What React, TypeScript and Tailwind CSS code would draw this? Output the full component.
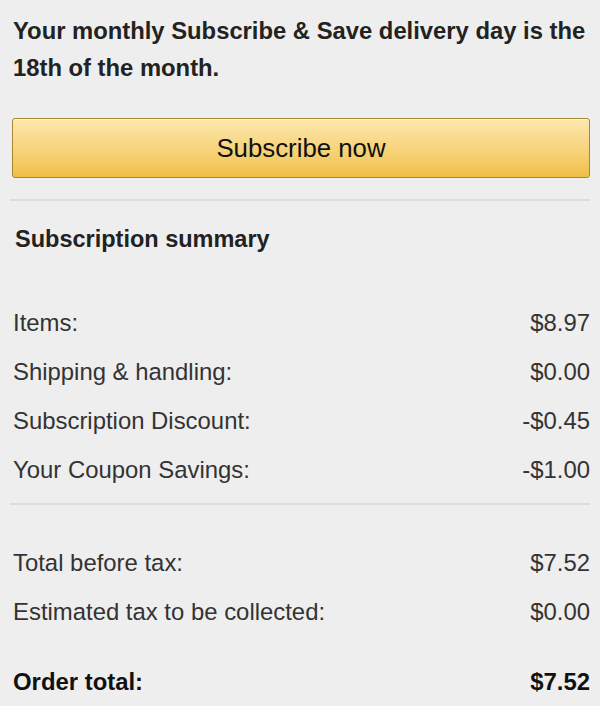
import React from "react";

const font = { fontFamily: '"Liberation Sans", Arial, sans-serif' };

function Row({ label, value, bold = false }: { label: string; value: string; bold?: boolean }) {
  return (
    <div className={`flex h-[49px] items-center justify-between ${bold ? "font-bold text-[#111111]" : "text-[#333333]"}`}>
      <span>{label}</span>
      <span>{value}</span>
    </div>
  );
}

export default function App() {
  return (
    <div className="min-h-[706px] w-[600px] bg-[#eeeeee] text-[#111111]" style={font}>
      <div className="pl-[13px] pr-[10px] pt-[12px]">
        <p className="text-[23.8px] font-bold leading-[37px] text-[#222222]">
          Your monthly Subscribe &amp; Save delivery day is the 18th of the month.
        </p>
        <button className="mt-[32px] -ml-px flex h-[60px] w-[578px] items-center justify-center rounded-[3px] border border-[#a88734] bg-gradient-to-b from-[#fde8ae] to-[#f0c043] text-[25.8px] text-[#111111] shadow-[inset_0_1px_0_rgba(255,255,255,0.6)]">
          Subscribe now
        </button>
        <div className="mt-[21px] -ml-[3px] h-[2px] w-[580px] bg-[#dddddd]" />
        <div className="mt-[19px] flex h-[40px] items-center pl-[2px] text-[23.5px] font-bold text-[#222222]">
          Subscription summary
        </div>
        <div className="mt-[38px] text-[23.9px]">
          <Row label="Items:" value="$8.97" />
          <Row label="Shipping & handling:" value="$0.00" />
          <Row label="Subscription Discount:" value="-$0.45" />
          <Row label="Your Coupon Savings:" value="-$1.00" />
        </div>
        <div className="mt-[9px] -ml-[3px] h-[2px] w-[580px] bg-[#dddddd]" />
        <div className="mt-[33px] text-[23.9px]">
          <Row label="Total before tax:" value="$7.52" />
          <Row label="Estimated tax to be collected:" value="$0.00" />
          <div className="mt-[21px]">
            <Row label="Order total:" value="$7.52" bold />
          </div>
        </div>
      </div>
    </div>
  );
}
